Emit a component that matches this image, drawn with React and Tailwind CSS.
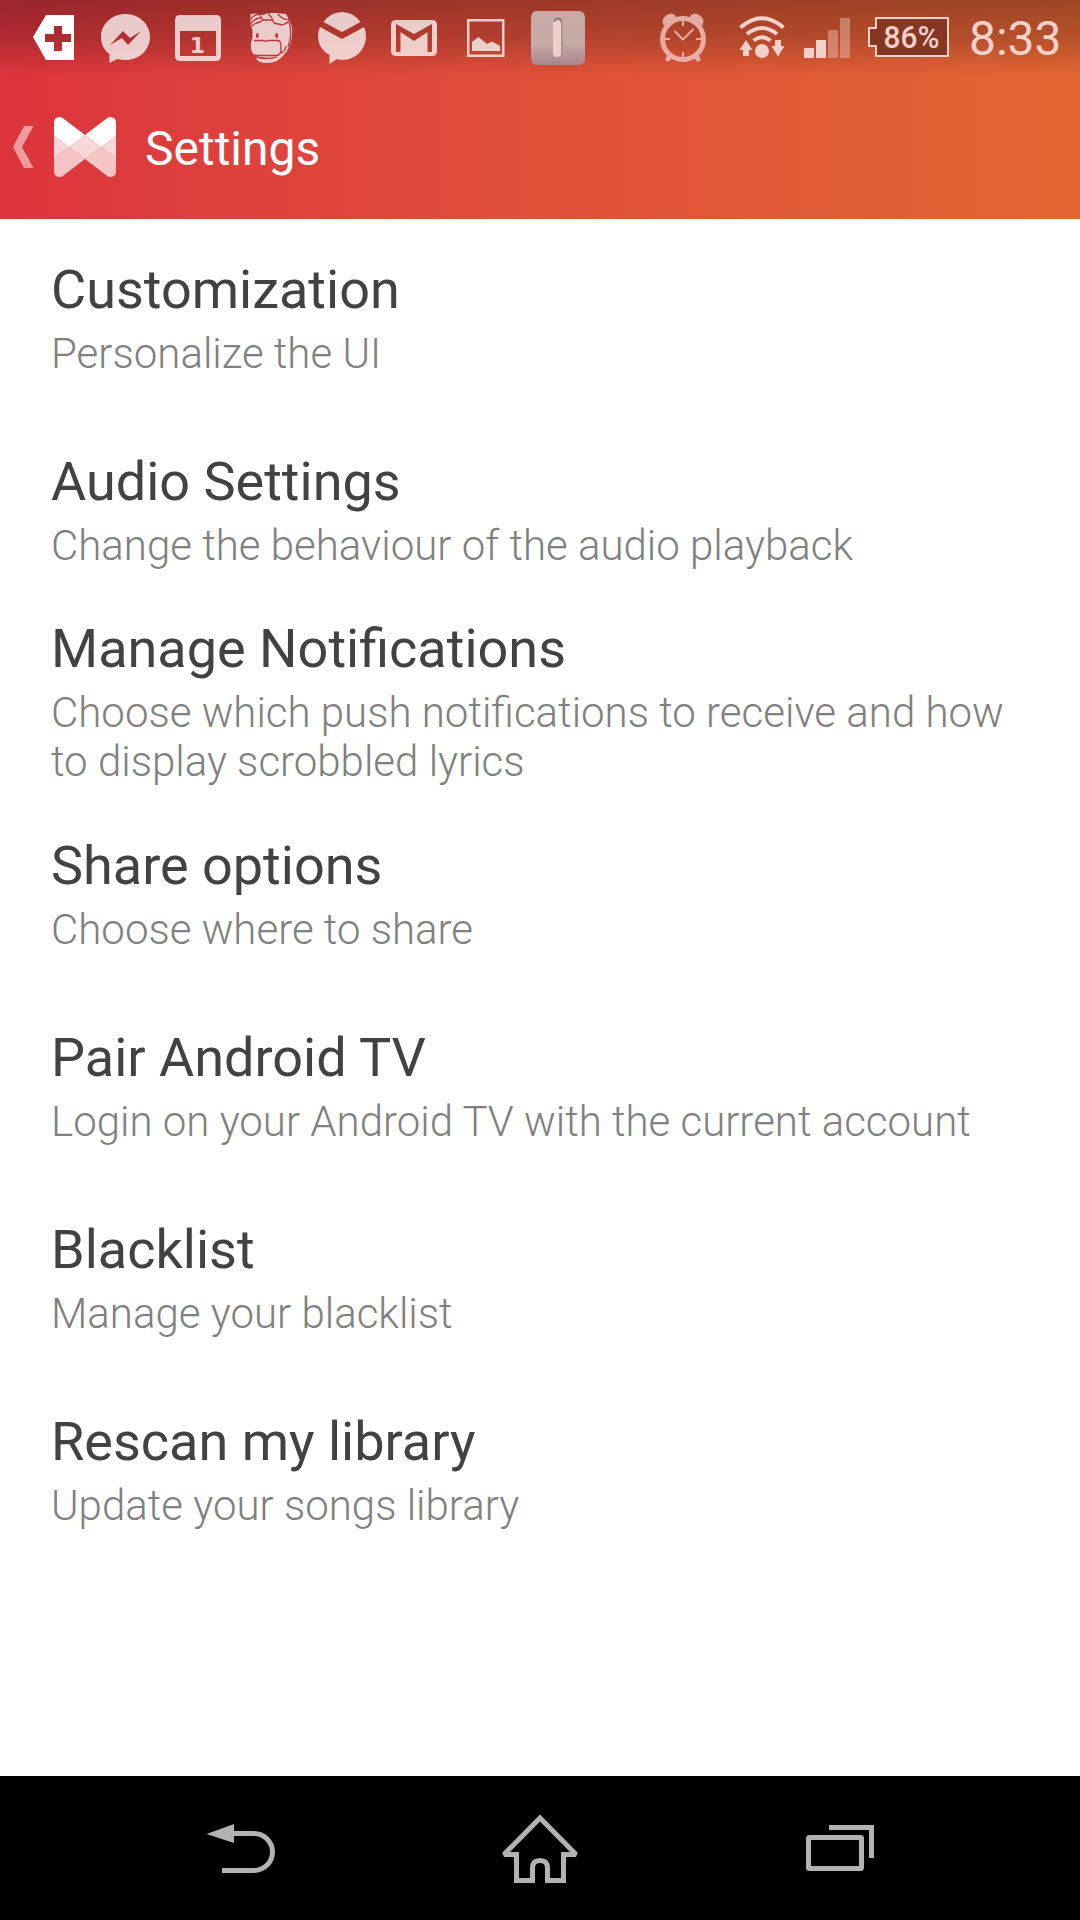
import React from 'react';

const settings = [
    { title: 'Customization', summary: 'Personalize the UI' },
    { title: 'Audio Settings', summary: 'Change the behaviour of the audio playback' },
    {
        title: 'Manage Notifications',
        summary: 'Choose which push notifications to receive and how to display scrobbled lyrics',
    },
    { title: 'Share options', summary: 'Choose where to share' },
    { title: 'Pair Android TV', summary: 'Login on your Android TV with the current account' },
    { title: 'Blacklist', summary: 'Manage your blacklist' },
    { title: 'Rescan my library', summary: 'Update your songs library' },
];

// Left group of notification icons
const NotificationIcons = () => (
    <svg width="600" height="72" viewBox="0 0 600 72" fill="#fff" className="shrink-0">
        <path fillRule="evenodd" d="M33 37 46 15H74V60H46ZM54 26V34H45V42H54V51H62V42H71V34H62V26Z" />
        <g fillOpacity=".75">
            {/* Messenger */}
            <path
                fillRule="evenodd"
                d="M125.500 14C139 14 150 24 150 37S139 60 125.500 60Q121 60 117.500 59L109.500 63V54C104 50 101 44 101 37 101 24 112 14 125.500 14ZM110 45 123 31 130 38 141 31 128 45 122 38Z"
            />
            {/* Calendar */}
            <path
                fillRule="evenodd"
                d="M180 15H216Q221 15 221 20V56Q221 61 216 61H180Q175 61 175 56V20Q175 15 180 15ZM180 31V56H216V31Z"
            />
            {/* Hippo */}
            <path d="M250.500 14 256 13.500 263 15 268 13H276L286 14Q290 20 292 27 293 38 289 47 285 56 276 61.500 268 64 260 62 256 60 256 56 251 55 251 50V43Q251.500 40 252.500 38V30L250.500 26Z" />
        </g>
        <g fill="none" stroke="#b93639" strokeWidth="1.300">
            <path d="M250 20Q253 15 259 14M250 25Q254 18 262 17.500M259 14 263 20 260 22Q254 23 251 27M268 13Q272 17 274 23M274 23 282 25Q289 23 289 19 284 21 278 14M263 20H273" />
            <path d="M254 40.500H264Q266 42 268 40.500H278Q281 41 281 46V51Q280 55.500 276 55.500H256Q251 55 251 50" />
            <path d="M256 57Q267 60 277 57M281 53Q285 52 286 46M289 22Q293 34 288 47" />
        </g>
        <g fill="#b93639">
            <ellipse cx="257.300" cy="35.500" rx="1.500" ry="2.500" />
            <ellipse cx="276.700" cy="35.500" rx="1.500" ry="2.500" />
        </g>
        <text x="197.500" y="52.500" textAnchor="middle" fontFamily="DejaVu Sans" fontWeight="700" fontSize="22" fillOpacity=".75">
            1
        </text>
        <g fillOpacity=".75">
            {/* Mail bubble */}
            <path d="M323.500 22Q331 12 342 12T360.500 22L342 32Z" />
            <path d="M320 27 342 39 364 27Q366 31 366 36C366 49 356 60 342 60Q339 60 337 59L329.500 64V55C322 51 318 44 318 36Q318 31 320 27Z" />
            {/* Gmail */}
            <path
                fillRule="evenodd"
                d="M396 20H432Q437 20 437 25V51Q437 56 432 56H396Q391 56 391 51V25Q391 20 396 20ZM396 24V52H400.500V32L414 41 427.500 32V52H432V24L414 34Z"
            />
            {/* Gallery */}
            <path fillRule="evenodd" d="M467 19H504.500V57H467ZM469.500 21.500V54.500H502V21.500Z" />
            <path d="M472 42 478.500 37 487 44 492 41.500 500 46V51H472Z" />
        </g>
        <defs>
            <linearGradient id="tile" x2="0" y2="1">
                <stop offset="0" stopColor="#c9aaa5" />
                <stop offset=".6" stopColor="#c5aaa6" />
                <stop offset="1" stopColor="#a9858b" />
            </linearGradient>
        </defs>
        <rect x="531" y="11" width="54" height="54" rx="6" fill="url(#tile)" />
        <rect x="554" y="18" width="9" height="38" rx="4.500" fill="#b29392" />
        <rect x="553" y="20" width="8" height="37" rx="4" fill="#edcfcc" />
        <path d="M554.500 22Q555 18.500 558 18.500T561.500 22" fill="none" stroke="#85797a" strokeWidth="1.500" />
    </svg>
);

// Alarm, wifi, signal and battery
const SystemIcons = () => (
    <svg width="312" height="72" viewBox="650 0 312 72" fill="#f3d1cb" className="shrink-0">
        <g opacity=".8" fill="#f3c6c1">
            <circle cx="683" cy="39" r="20.500" fill="none" stroke="#f3c6c1" strokeWidth="5" />
            <path d="M664 25Q661 19 667 15.500 673 12 676 17ZM702 25Q705 19 699 15.500 693 12 690 17Z" stroke="#f3c6c1" strokeWidth="1" />
            <path d="M670 55 668 59M696 55 698 59" stroke="#f3c6c1" strokeWidth="5" strokeLinecap="round" />
            <path d="M683 21V26M683 52V57M665 39H670M696 39H701M674.500 31 683 39.500 693.500 29" fill="none" stroke="#f3c6c1" strokeWidth="2" />
        </g>
        <g fill="none" stroke="#f3d1cb" strokeWidth="4">
            <path d="M740.500 27.500Q762 9 783.500 27.500M747 34Q762 22 777 34M753.500 40.500Q762 34 770.500 40.500" />
        </g>
        <circle cx="762" cy="51" r="7" />
        <path d="M746 40 752.500 50H749V56H743V50H739.500ZM775 40H781V46H784.500L778 56.500 771.500 46H775Z" />
        <path d="M804 48H814V58H804ZM816 40H826V58H816Z" />
        <path d="M828 30H838V58H828ZM840 18H850V58H840Z" fillOpacity=".4" />
        <path d="M876 18H948V56H876V46H869V28H876Z" fill="#853722" stroke="#f3d1cb" strokeWidth="2" strokeLinejoin="round" />
        <text x="911.500" y="48" textAnchor="middle" fontFamily="Roboto" fontWeight="500" fontSize="31" textLength="56" lengthAdjust="spacingAndGlyphs">
            86%
        </text>
    </svg>
);

const StatusBar = () => (
    <div className="flex h-[75px] justify-between bg-linear-to-b from-black/30 via-black/20 to-transparent">
        <NotificationIcons />
        <div className="flex">
            <SystemIcons />
            <span className="w-[118px] pl-[7px] pt-[11px] text-[48px] leading-[56px] text-[#f3d1cb]">8:33</span>
        </div>
    </div>
);

const ActionBar = () => (
    <div className="flex h-36 items-center">
        <svg width="126" height="144" viewBox="0 75 126 144" fill="#fff">
            <path d="M24 126H33.500L22 147 33.500 168H24L13 147Z" fillOpacity=".5" />
            <path d="M54 136V123Q54 117 60 117 62 117 64 119L85 135 106 119Q108 117 110 117 116 117 116 123V136L101 147 85 135 69 147Z" />
            <path d="M54 136 69 147 54 158ZM116 136 101 147 116 158ZM85 135 101 147 85 159 69 147Z" fillOpacity=".8" />
            <path d="M54 158 69 147 85 159 101 147 116 158V171Q116 177 110 177 108 177 106 175L85 159 64 175Q62 177 60 177 54 177 54 171Z" fillOpacity=".7" />
        </svg>
        <h1 className="pl-[19px] pt-1 text-[48px] leading-[56px] text-white">Settings</h1>
    </div>
);

const SettingRow = ({ title, summary }) => (
    <li className="flex h-48 flex-col justify-center px-[51px] pt-[5px]">
        <h2 className="text-[54px] leading-[64px] text-[#424242]">{title}</h2>
        <p className="pt-[7px] text-[42px] leading-[49px] font-light text-[#808080]">{summary}</p>
    </li>
);

const NavBar = () => (
    <nav className="flex h-36 justify-center bg-black text-[#b2b2b2]">
        <svg width="1080" height="144" viewBox="0 1776 1080 144" fill="none" stroke="currentColor" strokeWidth="5" strokeMiterlimit="2">
            <path d="M206.500 1834 234 1824V1843Z" fill="currentColor" stroke="none" />
            <path d="M234 1833.500H254A18.500 18.500 0 0 1 254 1870.500H222" />
            <path d="M540 1818 504 1854.500H516.500V1880.500H532.500V1868Q532.500 1860.500 540 1860.500T547.500 1868V1880.500H563.500V1854.500H576Z" />
            <rect x="808.500" y="1837.500" width="53" height="31" rx="1" />
            <path d="M829 1827.500H871.500V1858" />
        </svg>
    </nav>
);

const App = () => (
    <div className="flex h-[1920px] w-[1080px] flex-col bg-white font-[Roboto,sans-serif]">
        <header className="h-[219px] bg-linear-to-r from-[#dc343d] to-[#e26633]">
            <StatusBar />
            <ActionBar />
        </header>
        <ul className="flex-1">
            {settings.map((item) => (
                <SettingRow key={item.title} title={item.title} summary={item.summary} />
            ))}
        </ul>
        <NavBar />
    </div>
);

export default App;
